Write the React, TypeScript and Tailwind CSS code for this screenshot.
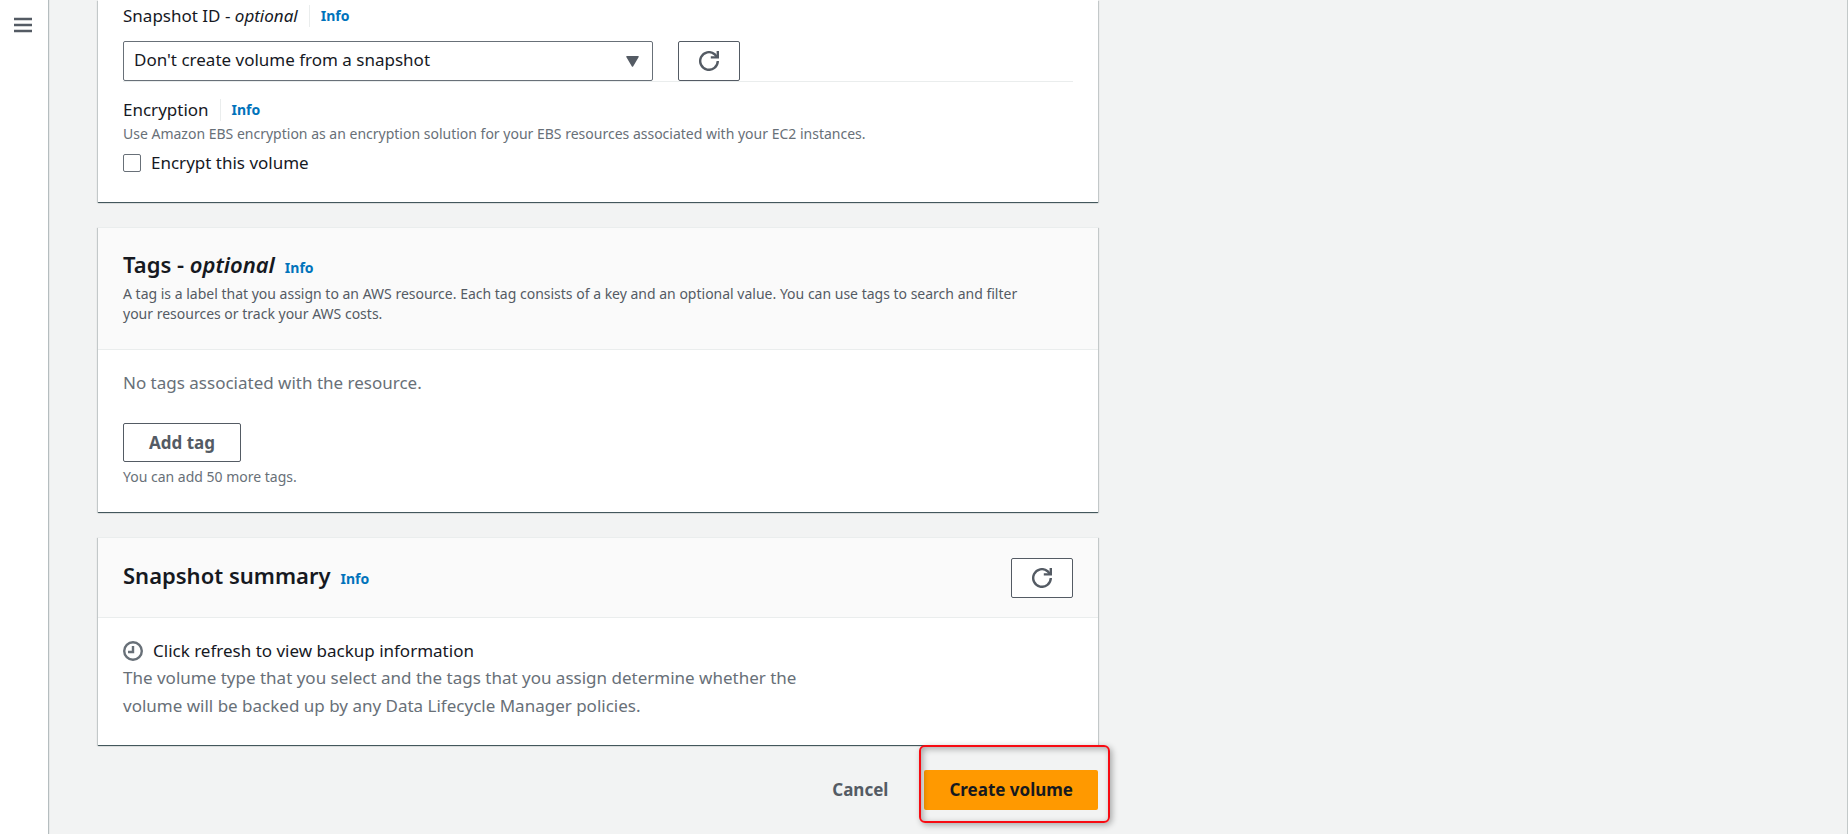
import React, { useState } from 'react';

interface InfoLinkProps {
  divided?: boolean;
}

const InfoLink: React.FC<InfoLinkProps> = ({ divided = false }) => (
  <a
    href="#info"
    className={`text-sm leading-[22px] font-bold text-[#0073bb] hover:underline ${divided ? 'border-l border-[#eaeded] pl-[11px]' : ''}`}
  >
    Info
  </a>
);

const RefreshIcon = () => (
  <svg width="20" height="20" viewBox="0 0 20 20" fill="none" stroke="currentColor" strokeWidth="2.4">
    <path d="M18.8 10a8.8 8.8 0 1 1-3.2-6.8L18 6" />
    <path d="M18.8 0v6.4h-7" />
  </svg>
);

const ClockIcon = () => (
  <svg width="20" height="20" viewBox="0 0 20 20" fill="none" stroke="currentColor" strokeWidth="2.4">
    <circle cx="10" cy="10" r="8.8" />
    <path d="M10 5v6H5" />
  </svg>
);

const RefreshButton: React.FC<{ label: string }> = ({ label }) => (
  <button
    type="button"
    aria-label={label}
    className="flex h-10 w-[62px] shrink-0 cursor-pointer items-center justify-center rounded-xs border border-[#545b64] bg-white text-[#545b64] hover:bg-[#fafafa]"
  >
    <RefreshIcon />
  </button>
);

const Card: React.FC<{ children: React.ReactNode }> = ({ children }) => (
  <section className="bg-white shadow-[0_1px_1px_0_#001c244d,1px_1px_1px_0_#001c2426,-1px_1px_1px_0_#001c2426,0_1px_0_0_#879596]">
    {children}
  </section>
);

const CardHeader: React.FC<{ children: React.ReactNode }> = ({ children }) => (
  <header className="border-y border-[#eaeded] bg-[#fafafa] px-[25px]">{children}</header>
);

export default function App() {
  const [encrypted, setEncrypted] = useState(false);

  return (
    <div className="flex min-h-screen bg-[#f2f3f3] font-['Noto_Sans',sans-serif] text-[17px] leading-6 text-[#16191f]">
      <aside className="w-12 shrink-0 bg-white shadow-[1px_0_1px_0_#001c2440]">
        <button type="button" aria-label="Open navigation" className="flex w-full cursor-pointer justify-center pt-[17px] pr-0.5 text-[#545b64]">
          <svg width="18" height="16" viewBox="0 0 18 16" stroke="currentColor" strokeWidth="2.4">
            <path d="M0 2h18M0 8h18M0 14h18" />
          </svg>
        </button>
      </aside>

      <main className="flex-1 border-r border-[#c3c9c9] pl-[50px]">
        <form className="flex max-w-[1000px] flex-col gap-[25px]" onSubmit={(e) => e.preventDefault()}>
          <Card>
            <div className="px-[25px] pt-1 pb-[27px]">
              <div className="flex items-center gap-[11px]">
                <label htmlFor="snapshot">
                  Snapshot ID - <i>optional</i>
                </label>
                <InfoLink divided />
              </div>
              <div className="mt-[13px] flex gap-[25px] border-b border-[#eaeded]">
                <div className="relative w-[530px]">
                  <select
                    id="snapshot"
                    className="h-10 w-full appearance-none rounded-xs border border-[#687078] bg-white px-2.5 pb-0.5"
                  >
                    <option>Don't create volume from a snapshot</option>
                  </select>
                  <svg className="pointer-events-none absolute top-[15px] right-[14px] text-[#545b64]" width="13" height="11" viewBox="0 0 13 11" fill="currentColor">
                    <path d="M1 0h11q1.3 0 .7 1L7.1 10.4q-.6.8-1.2 0L.3 1Q-.3 0 1 0Z" />
                  </svg>
                </div>
                <RefreshButton label="Refresh snapshots" />
              </div>

              <div className="mt-4 flex items-center gap-[11px]">
                <span>Encryption</span>
                <InfoLink divided />
              </div>
              <p className="text-sm leading-6 text-[#687078]">
                Use Amazon EBS encryption as an encryption solution for your EBS resources associated with your EC2 instances.
              </p>
              <label className="mt-[5px] flex items-center gap-2.5">
                <input
                  type="checkbox"
                  checked={encrypted}
                  onChange={(e) => setEncrypted(e.target.checked)}
                  className="size-[18px] appearance-none rounded-xs border border-[#687078] bg-white checked:bg-[#0073bb]"
                />
                Encrypt this volume
              </label>
            </div>
          </Card>

          <Card>
            <CardHeader>
              <div className="pt-[22px] pb-[25px]">
                <div className="flex items-baseline gap-2.5">
                  <h2 className="text-[22px] leading-7 font-semibold">
                    Tags - <i>optional</i>
                  </h2>
                  <InfoLink />
                </div>
                <p className="mt-[5px] max-w-[920px] text-sm text-[#545b64]">
                  A tag is a label that you assign to an AWS resource. Each tag consists of a key and an optional value. You can use tags to search and filter your resources or track your AWS costs.
                </p>
              </div>
            </CardHeader>
            <div className="px-[25px] pt-[21px] pb-[25px]">
              <p className="text-[#687078]">No tags associated with the resource.</p>
              <button
                type="button"
                className="mt-7 h-[39px] cursor-pointer rounded-xs border border-[#545b64] bg-white px-[25px] font-bold text-[#545b64] hover:bg-[#fafafa]"
              >
                Add tag
              </button>
              <p className="mt-[5px] text-sm text-[#687078]">You can add 50 more tags.</p>
            </div>
          </Card>

          <Card>
            <CardHeader>
              <div className="flex h-[79px] items-center justify-between">
                <div className="flex items-baseline gap-2.5 pb-1">
                  <h2 className="text-[22px] leading-7 font-semibold">Snapshot summary</h2>
                  <InfoLink />
                </div>
                <RefreshButton label="Refresh summary" />
              </div>
            </CardHeader>
            <div className="px-[25px] pt-[21px] pb-[25px]">
              <div className="flex items-center gap-2.5">
                <span className="text-[#687078]">
                  <ClockIcon />
                </span>
                Click refresh to view backup information
              </div>
              <p className="mt-px max-w-[700px] leading-7 text-[#687078]">
                The volume type that you select and the tags that you assign determine whether the volume will be backed up by any Data Lifecycle Manager policies.
              </p>
            </div>
          </Card>

          <footer className="flex items-center justify-end gap-[11px]">
            <button type="button" className="h-10 cursor-pointer px-[25px] font-bold text-[#545b64]">
              Cancel
            </button>
            <div className="relative">
              <button type="submit" className="h-10 cursor-pointer rounded-xs bg-[#ff9900] px-[25px] font-bold text-[#16191f] hover:bg-[#ec7211]">
                Create volume
              </button>
              <div className="pointer-events-none absolute -top-[25px] -right-3 -bottom-[13px] -left-[5px] rounded-md border-2 border-[#f70b12] shadow-[2px_2px_6px_#00000050,inset_2px_2px_6px_#00000050]" />
            </div>
          </footer>
        </form>
      </main>
    </div>
  );
}
